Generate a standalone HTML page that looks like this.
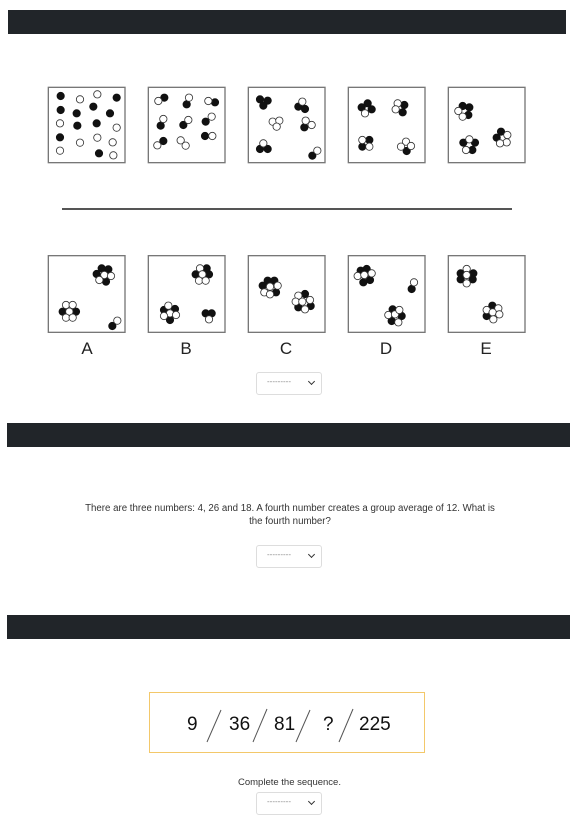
<!DOCTYPE html>
<html><head><meta charset="utf-8"><style>
body{margin:0;width:579px;height:826px;background:#fff;position:relative;overflow:hidden;font-family:"Liberation Sans",sans-serif;color:#222}
.bar{position:absolute;background:#212529;height:24px}
.sel{position:absolute;width:64px;height:21px;border:1px solid #ddd;border-radius:3px;background:#fff}
.sel span{position:absolute;left:10px;top:4px;font-size:8px;color:#888;letter-spacing:0px}
.sel i{position:absolute;right:7px;top:6px;width:4px;height:4px;border-right:1.3px solid #333;border-bottom:1.3px solid #333;transform:rotate(45deg)}
svg .b{fill:#111;stroke:#111;stroke-width:2.5}
svg .w{fill:#fff;stroke:#333;stroke-width:2.5}
svg circle{r:11px}
svg rect{fill:#fff;stroke:#777;stroke-width:4}
.lab{position:absolute;top:339px;font-size:17px;color:#222;width:30px;text-align:center}
</style></head><body>
<div class="bar" style="left:8px;top:10px;width:558px"></div>
<div class="bar" style="left:7px;top:423px;width:563px"></div>
<div class="bar" style="left:7px;top:615px;width:563px"></div>

<svg style="position:absolute;left:40px;top:80px" width="500" height="90" viewBox="0 0 1500 270">
<rect x="25" y="22" width="230" height="226"/><rect x="325" y="22" width="230" height="226"/><rect x="625" y="22" width="230" height="226"/><rect x="925" y="22" width="230" height="226"/><rect x="1225" y="22" width="230" height="226"/>
<g class="b"><circle cx="62" cy="48" r="11"/><circle cx="230" cy="53" r="11"/><circle cx="62" cy="90" r="11"/><circle cx="110" cy="100" r="11"/><circle cx="160" cy="80" r="11"/><circle cx="210" cy="100" r="11"/><circle cx="112" cy="137" r="11"/><circle cx="170" cy="130" r="11"/><circle cx="60" cy="172" r="11"/><circle cx="177" cy="220" r="11"/>
<circle cx="373" cy="53" r="11"/><circle cx="440" cy="73" r="11"/><circle cx="525" cy="67" r="11"/><circle cx="362" cy="137" r="11"/><circle cx="430" cy="135" r="11"/><circle cx="497" cy="125" r="11"/><circle cx="370" cy="183" r="11"/><circle cx="495" cy="168" r="11"/>
<circle cx="660" cy="58" r="11"/><circle cx="683" cy="62" r="11"/><circle cx="670" cy="77" r="11"/><circle cx="775" cy="80" r="11"/><circle cx="795" cy="87" r="11"/><circle cx="793" cy="142" r="11"/><circle cx="660" cy="207" r="11"/><circle cx="683" cy="207" r="11"/><circle cx="817" cy="227" r="11"/>
<circle cx="965" cy="82" r="11"/><circle cx="983" cy="70" r="11"/><circle cx="995" cy="88" r="11"/><circle cx="1093" cy="75" r="11"/><circle cx="1088" cy="97" r="11"/><circle cx="988" cy="180" r="11"/><circle cx="967" cy="200" r="11"/><circle cx="1100" cy="213" r="11"/>
<circle cx="1268" cy="78" r="11"/><circle cx="1288" cy="82" r="11"/><circle cx="1285" cy="105" r="11"/><circle cx="1270" cy="188" r="11"/><circle cx="1305" cy="188" r="11"/><circle cx="1297" cy="210" r="11"/><circle cx="1383" cy="155" r="11"/><circle cx="1370" cy="173" r="11"/></g>
<g class="w"><circle cx="120" cy="58" r="11"/><circle cx="172" cy="43" r="11"/><circle cx="60" cy="130" r="11"/><circle cx="230" cy="143" r="11"/><circle cx="120" cy="188" r="11"/><circle cx="172" cy="173" r="11"/><circle cx="218" cy="187" r="11"/><circle cx="60" cy="212" r="11"/><circle cx="220" cy="226" r="11"/>
<circle cx="355" cy="63" r="11"/><circle cx="447" cy="53" r="11"/><circle cx="505" cy="63" r="11"/><circle cx="370" cy="117" r="11"/><circle cx="445" cy="120" r="11"/><circle cx="515" cy="110" r="11"/><circle cx="352" cy="196" r="11"/><circle cx="422" cy="181" r="11"/><circle cx="437" cy="197" r="11"/><circle cx="517" cy="168" r="11"/>
<circle cx="787" cy="65" r="11"/><circle cx="698" cy="125" r="11"/><circle cx="718" cy="122" r="11"/><circle cx="710" cy="140" r="11"/><circle cx="797" cy="122" r="11"/><circle cx="815" cy="135" r="11"/><circle cx="670" cy="190" r="11"/><circle cx="832" cy="212" r="11"/>
<circle cx="975" cy="100" r="11"/><circle cx="1073" cy="70" r="11"/><circle cx="1067" cy="88" r="11"/><circle cx="967" cy="180" r="11"/><circle cx="988" cy="200" r="11"/><circle cx="1098" cy="185" r="11"/><circle cx="1083" cy="200" r="11"/><circle cx="1113" cy="198" r="11"/>
<circle cx="1255" cy="93" r="11"/><circle cx="1268" cy="110" r="11"/><circle cx="1288" cy="178" r="11"/><circle cx="1278" cy="210" r="11"/><circle cx="1402" cy="165" r="11"/><circle cx="1400" cy="187" r="11"/><circle cx="1380" cy="190" r="11"/></g>
</svg>

<div style="position:absolute;left:62px;top:208px;width:450px;height:1.5px;background:#555"></div>

<svg style="position:absolute;left:40px;top:250px" width="500" height="150" viewBox="0 0 1500 450">
<rect x="25" y="17" width="230" height="230"/><rect x="325" y="17" width="230" height="230"/><rect x="625" y="17" width="230" height="230"/><rect x="925" y="17" width="230" height="230"/><rect x="1225" y="17" width="230" height="230"/>
<g class="b"><circle cx="185" cy="55" r="11"/><circle cx="205" cy="58" r="11"/><circle cx="170" cy="72" r="11"/><circle cx="198" cy="95" r="11"/><circle cx="68" cy="185" r="11"/><circle cx="108" cy="185" r="11"/><circle cx="217" cy="228" r="11"/>
<circle cx="500" cy="55" r="11"/><circle cx="467" cy="73" r="11"/><circle cx="507" cy="73" r="11"/><circle cx="372" cy="180" r="11"/><circle cx="405" cy="177" r="11"/><circle cx="390" cy="210" r="11"/><circle cx="497" cy="190" r="11"/><circle cx="515" cy="190" r="11"/>
<circle cx="683" cy="92" r="11"/><circle cx="703" cy="92" r="11"/><circle cx="668" cy="107" r="11"/><circle cx="708" cy="127" r="11"/><circle cx="795" cy="132" r="11"/><circle cx="775" cy="172" r="11"/><circle cx="812" cy="168" r="11"/>
<circle cx="962" cy="62" r="11"/><circle cx="980" cy="57" r="11"/><circle cx="970" cy="97" r="11"/><circle cx="990" cy="90" r="11"/><circle cx="1115" cy="117" r="11"/><circle cx="1058" cy="178" r="11"/><circle cx="1085" cy="198" r="11"/><circle cx="1055" cy="213" r="11"/>
<circle cx="1262" cy="70" r="11"/><circle cx="1300" cy="70" r="11"/><circle cx="1262" cy="88" r="11"/><circle cx="1298" cy="88" r="11"/><circle cx="1357" cy="167" r="11"/><circle cx="1340" cy="198" r="11"/></g>
<g class="w"><circle cx="193" cy="75" r="11"/><circle cx="213" cy="78" r="11"/><circle cx="178" cy="90" r="11"/><circle cx="78" cy="165" r="11"/><circle cx="98" cy="165" r="11"/><circle cx="88" cy="185" r="11"/><circle cx="78" cy="203" r="11"/><circle cx="98" cy="203" r="11"/><circle cx="232" cy="212" r="11"/>
<circle cx="480" cy="55" r="11"/><circle cx="487" cy="73" r="11"/><circle cx="477" cy="92" r="11"/><circle cx="497" cy="92" r="11"/><circle cx="385" cy="167" r="11"/><circle cx="390" cy="190" r="11"/><circle cx="372" cy="198" r="11"/><circle cx="408" cy="195" r="11"/><circle cx="507" cy="208" r="11"/>
<circle cx="690" cy="110" r="11"/><circle cx="713" cy="107" r="11"/><circle cx="673" cy="127" r="11"/><circle cx="690" cy="133" r="11"/><circle cx="775" cy="137" r="11"/><circle cx="767" cy="155" r="11"/><circle cx="787" cy="155" r="11"/><circle cx="810" cy="150" r="11"/><circle cx="795" cy="178" r="11"/>
<circle cx="953" cy="78" r="11"/><circle cx="973" cy="75" r="11"/><circle cx="995" cy="70" r="11"/><circle cx="1122" cy="97" r="11"/><circle cx="1045" cy="195" r="11"/><circle cx="1065" cy="193" r="11"/><circle cx="1075" cy="217" r="11"/><circle cx="1078" cy="180" r="11"/>
<circle cx="1280" cy="57" r="11"/><circle cx="1280" cy="75" r="11"/><circle cx="1280" cy="100" r="11"/><circle cx="1340" cy="180" r="11"/><circle cx="1375" cy="175" r="11"/><circle cx="1358" cy="187" r="11"/><circle cx="1378" cy="193" r="11"/><circle cx="1360" cy="208" r="11"/></g>
</svg>
<div class="lab" style="left:72px">A</div><div class="lab" style="left:171px">B</div><div class="lab" style="left:271px">C</div><div class="lab" style="left:371px">D</div><div class="lab" style="left:471px">E</div>

<div class="sel" style="left:256px;top:372px"><span>---------</span><i></i></div>

<div style="position:absolute;left:70px;top:502px;width:440px;text-align:center;font-size:9.7px;line-height:13px;color:#333">There are three numbers: 4, 26 and 18. A fourth number creates a group average of 12. What is<br>the fourth number?</div>
<div class="sel" style="left:256px;top:545px"><span>---------</span><i></i></div>

<div style="position:absolute;left:149px;top:692px;width:274px;height:59px;border:1.5px solid #f3c86a"></div>
<svg style="position:absolute;left:149px;top:692px" width="278" height="63" viewBox="0 0 278 63">
<g font-family="Liberation Sans,sans-serif" font-size="19" fill="#111">
<text x="38" y="38">9</text><text x="80" y="38">36</text><text x="125" y="38">81</text><text x="174" y="38">?</text><text x="210" y="38">225</text></g>
<g stroke="#555" stroke-width="1"><line x1="58" y1="50" x2="72" y2="18"/><line x1="104" y1="50" x2="118" y2="17"/><line x1="147" y1="50" x2="161" y2="18"/><line x1="190" y1="50" x2="204" y2="17"/></g>
</svg>
<div style="position:absolute;left:0;width:579px;top:777px;text-align:center;font-size:9.5px;color:#333">Complete the sequence.</div>
<div class="sel" style="left:256px;top:792px"><span>---------</span><i></i></div>
</body></html>
